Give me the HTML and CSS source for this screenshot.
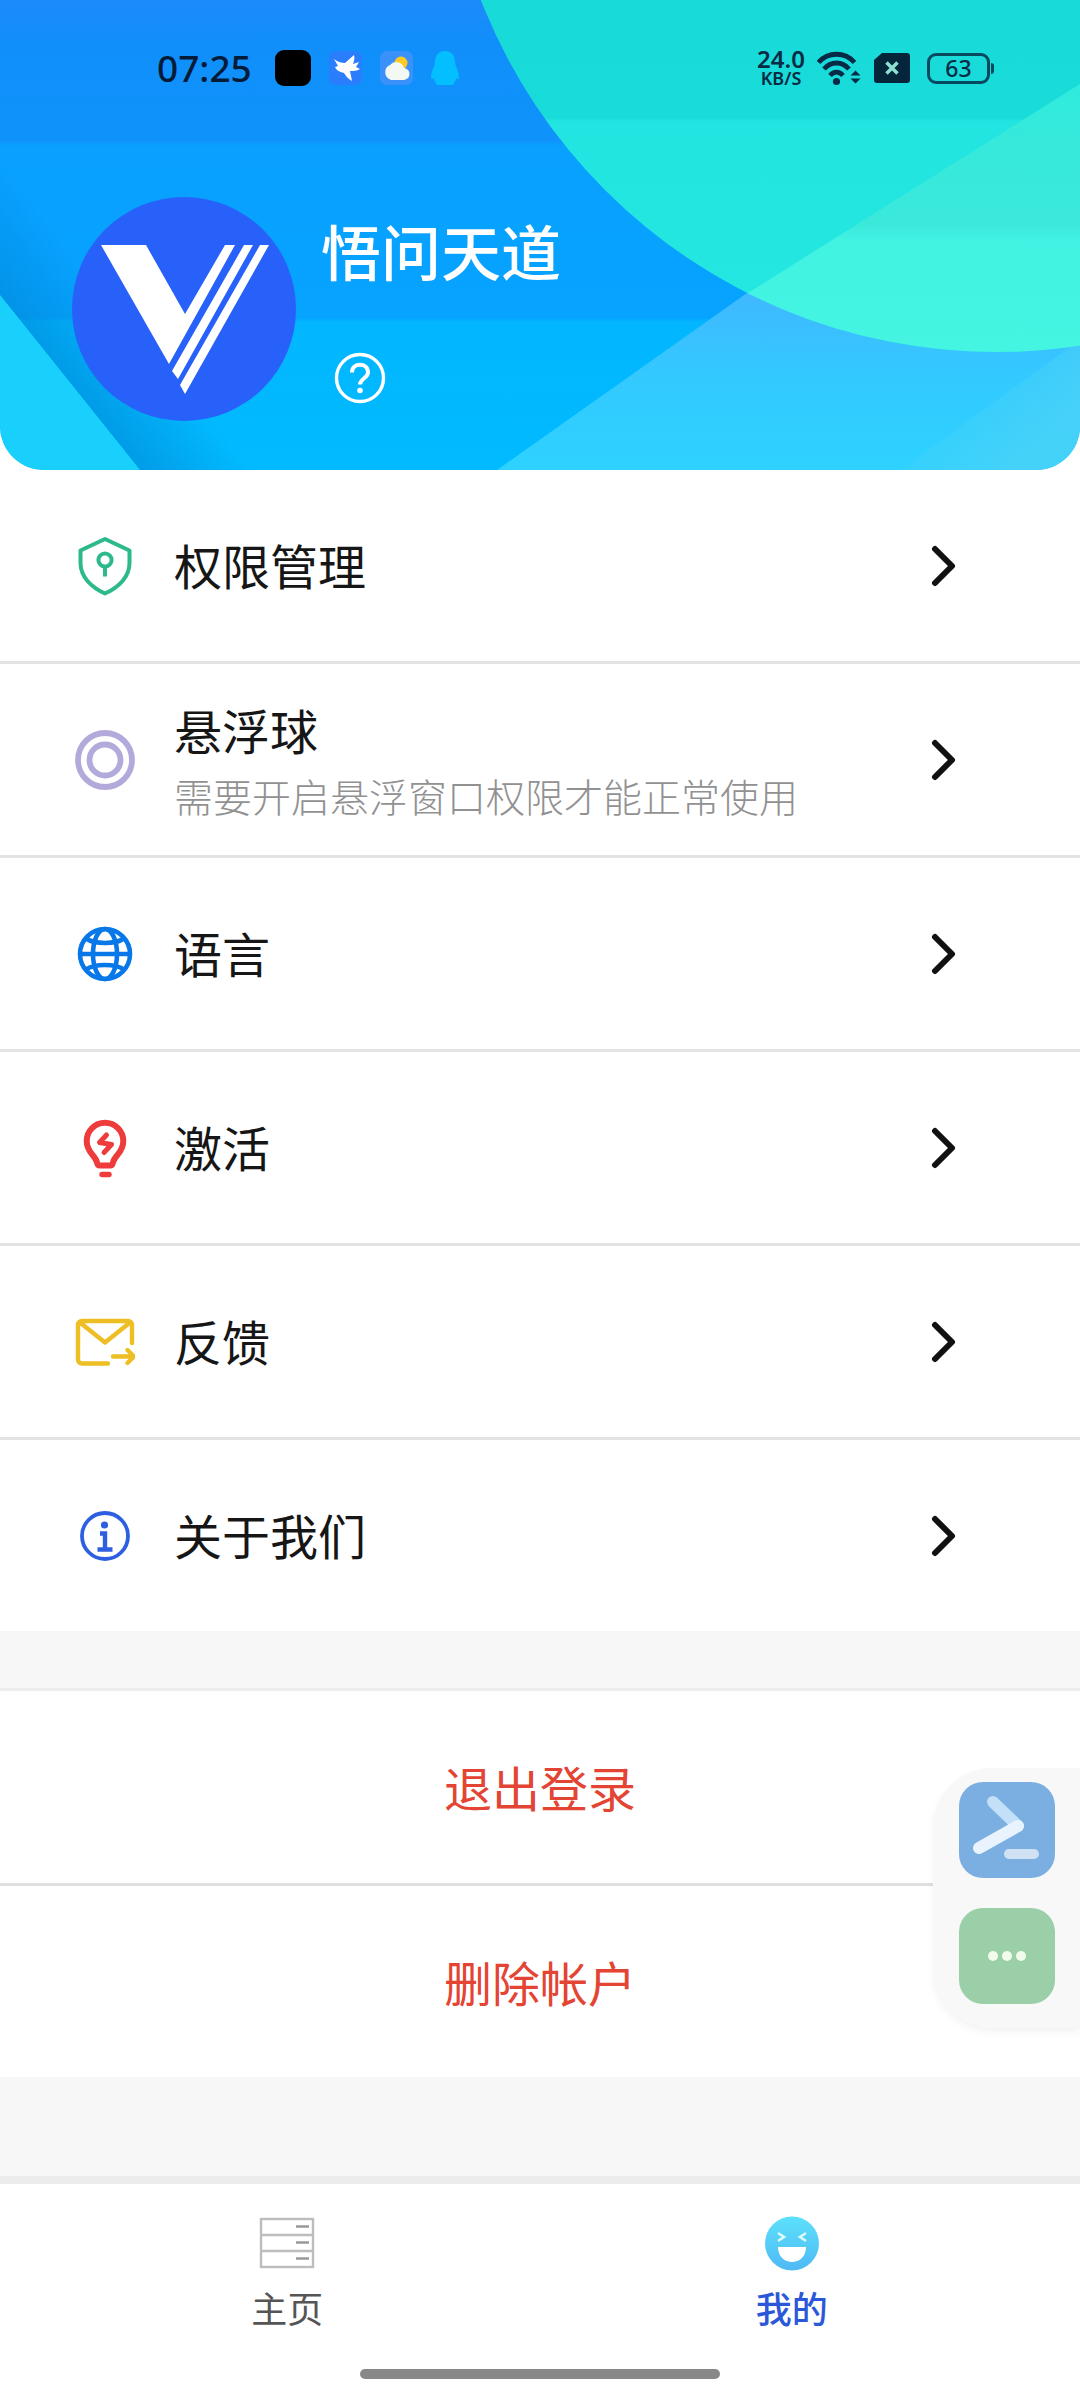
FILE: index.html
```html
<!DOCTYPE html>
<html lang="zh-CN">
<head>
<meta charset="utf-8">
<title>我的</title>
<link rel="stylesheet" href="styles.css">
</head>
<body>
<div class="screen">
  <header class="hero">
    <svg class="hero-art" viewBox="0 0 1080 470" width="1080" height="470" aria-hidden="true">
      <defs>
        <linearGradient id="base" x1="0" y1="0" x2="0" y2="1">
          <stop offset="0" stop-color="#1c8afb"/><stop offset=".1" stop-color="#108ffb"/>
          <stop offset=".3" stop-color="#0f93fb"/><stop offset=".31" stop-color="#09a0ff"/>
          <stop offset=".675" stop-color="#06a3ff"/><stop offset=".685" stop-color="#02b6ff"/>
          <stop offset="1" stop-color="#01baff"/>
        </linearGradient>
        <linearGradient id="edge" gradientUnits="userSpaceOnUse" x1="0" y1="295" x2="65" y2="242">
          <stop offset="0" stop-color="#0089d8" stop-opacity=".6"/><stop offset="1" stop-color="#0089d8" stop-opacity="0"/>
        </linearGradient>
        <linearGradient id="teal" x1="0" y1="0" x2="0" y2="352" gradientUnits="userSpaceOnUse">
          <stop offset="0" stop-color="#18dad8"/><stop offset=".335" stop-color="#19dbd9"/>
          <stop offset=".345" stop-color="#22e4e0"/><stop offset="1" stop-color="#25e8e2"/>
        </linearGradient>
        <linearGradient id="mint" x1="0" y1="50" x2="0" y2="352" gradientUnits="userSpaceOnUse">
          <stop offset="0" stop-color="#2beee0"/><stop offset=".3" stop-color="#36e9da"/>
          <stop offset=".58" stop-color="#3be9db"/><stop offset=".63" stop-color="#42f2e2"/><stop offset="1" stop-color="#45f5e2"/>
        </linearGradient>
        <linearGradient id="sky" x1="0" y1="300" x2="0" y2="470" gradientUnits="userSpaceOnUse">
          <stop offset="0" stop-color="#3fb9ff"/><stop offset=".45" stop-color="#33c9ff"/><stop offset="1" stop-color="#2dd2ff"/>
        </linearGradient>
        <linearGradient id="glow" gradientUnits="userSpaceOnUse" x1="960" y1="360" x2="1040" y2="440">
          <stop offset="0" stop-color="#4ad2f7" stop-opacity="0"/><stop offset="1" stop-color="#4ad2f7" stop-opacity=".8"/>
        </linearGradient>
        <clipPath id="disc"><circle cx="996" cy="-201" r="553"/></clipPath>
      </defs>
      <rect width="1080" height="470" fill="url(#base)"/>
      <path d="M0 170V295L140 470H290Z" fill="url(#edge)"/>
      <path d="M0 295L140 470H0Z" fill="#18d0fb"/>
      <path d="M740 298L1080 54V470H497Z" fill="url(#sky)"/>
      <path d="M900 470L1080 340V470Z" fill="url(#glow)"/>
      <circle cx="996" cy="-201" r="553" fill="url(#teal)"/>
      <path d="M740 298L1080 84V470H497Z" fill="url(#mint)" clip-path="url(#disc)"/>
    </svg>
    <div class="status">
      <div class="status-left">
        <span class="clock">07:25</span>
        <svg width="36" height="36" viewBox="0 0 36 36"><rect width="36" height="36" rx="9" fill="#000"/></svg>
        <svg width="33" height="36" viewBox="0 0 33 36"><rect y="1" width="33" height="34" rx="7" fill="#2a7dfc"/><path d="M5 9c4 3 8 4 11 4L25 5c1 3 0 6-1 9l6-2-3 5 4 2c-3 2-7 2-10 2l2 10c-4-2-6-5-8-8-5-1-8-3-9-6l3-1Z" fill="#fff"/></svg>
        <svg width="33" height="36" viewBox="0 0 33 36"><rect y="1" width="33" height="34" rx="7" fill="#3b91fa"/><circle cx="21" cy="13" r="6.500" fill="#ffcb22"/><path d="M11 30a8 8 0 0 1-1-15 8 8 0 0 1 14 3 6 6 0 0 1-1 12Z" fill="#f3f8f3"/></svg>
        <svg class="bell" width="30" height="36" viewBox="0 0 30 36"><path d="M15 1c7 0 10 5 10 11 0 4 4 9 4 15 0 3-2 2-3 1 0 2-1 4-2 5 1 2-2 2-9 2s-10 0-9-2c-1-1-2-3-2-5-1 1-3 2-3-1 0-6 4-11 4-15C5 6 8 1 15 1Z" fill="#04bfff"/></svg>
      </div>
      <div class="status-right">
        <div class="speed"><span class="speed-value">24.0</span><span class="speed-unit">KB/S</span></div>
        <svg class="wifi" width="44" height="36" viewBox="0 0 44 36" fill="none" stroke="#072b45" stroke-width="4.800"><path d="M1.500 12.500C11 1.500 28 1.500 37.500 12.500M7 19C14 11 25 11 32 19M13 25.500c4-4.500 9-4.500 13 0"/><circle cx="19.500" cy="31.500" r="3.600" fill="#072b45" stroke="none"/><path d="M33.500 25.500l5-5 5 5ZM33.500 28.500l5 5 5-5Z" fill="#072b45" stroke="none"/></svg>
        <svg class="sim" width="36" height="30" viewBox="0 0 36 30"><path d="M8 0h25a3 3 0 0 1 3 3v24a3 3 0 0 1-3 3H3a3 3 0 0 1-3-3V7Z" fill="#05253a"/><path d="M12.500 9.500l11 11M23.500 9.500l-11 11" stroke="#8de0cf" stroke-width="3.500"/></svg>
        <div class="battery">63</div>
      </div>
    </div>
    <div class="profile">
      <svg class="avatar" width="226" height="226" viewBox="0 0 226 226"><circle cx="113" cy="113" r="112" fill="#2861fa"/><path d="M30 49H75L114 118L154 49H164L98 168ZM173 49H182L107 183L101 175ZM189 49H198L114 198L109 189Z" fill="#fff"/></svg>
      <div class="who">
        <div class="name">悟问天道</div>
        <svg class="help" width="52" height="52" viewBox="0 0 52 52" fill="none" stroke="#fff" stroke-width="3.400"><circle cx="26" cy="26" r="23.500"/><path d="M18 20.500c0-10.500 16-10.500 16 0 0 5.500-8 6-8 12" stroke-width="4"/><circle cx="26" cy="38.500" r="2.800" fill="#fff" stroke="none"/></svg>
      </div>
    </div>
  </header>

  <main>
    <ul class="menu">
      <li class="row">
        <svg class="icon" viewBox="0 0 60 60" stroke="#2cb98c" stroke-width="4"><path d="M30 3L54.500 14.500v12.500c0 14-11 24.500-24.500 30.500C16.500 51.500 5.500 41 5.500 27V14.500Z" stroke-linejoin="round"/><circle cx="30" cy="24" r="6.600"/><path d="M30 30.500v10"/></svg>
        <div class="label">权限管理</div>
        <svg class="chevron" viewBox="0 0 26 44"><path d="M4 5l17 17L4 39"/></svg>
      </li>
      <li class="row">
        <svg class="icon" viewBox="0 0 60 60" stroke="#b3aadb" stroke-width="5.800"><circle cx="30" cy="30" r="27"/><circle cx="30" cy="30" r="15.500"/></svg>
        <div class="label">悬浮球<small>需要开启悬浮窗口权限才能正常使用</small></div>
        <svg class="chevron" viewBox="0 0 26 44"><path d="M4 5l17 17L4 39"/></svg>
      </li>
      <li class="row">
        <svg class="icon" viewBox="0 0 60 60" stroke="#0878e8" stroke-width="4.600"><circle cx="30" cy="30" r="25"/><ellipse cx="30" cy="30" rx="12" ry="25"/><path d="M5 30h50M11 14.500c9 6 29 6 38 0M11 45.500c9-6 29-6 38 0"/></svg>
        <div class="label">语言</div>
        <svg class="chevron" viewBox="0 0 26 44"><path d="M4 5l17 17L4 39"/></svg>
      </li>
      <li class="row">
        <svg class="icon" viewBox="0 0 60 60" stroke="#ee3b3b" stroke-width="6" stroke-linejoin="round" stroke-linecap="round"><path d="M22 44.500C20.500 37 11.700 35 11.700 23a18.300 18.300 0 0 1 36.600 0C48.300 35 39.500 37 38 44.500Q37.500 47.500 35 47.500H25Q22.500 47.500 22 44.500Z"/><path d="M31.500 17L24.500 24.500L36.500 26.500L29 34.500" stroke-width="5"/><path d="M27 56.500h7" stroke-width="5.400"/></svg>
        <div class="label">激活</div>
        <svg class="chevron" viewBox="0 0 26 44"><path d="M4 5l17 17L4 39"/></svg>
      </li>
      <li class="row">
        <svg class="icon" viewBox="0 0 60 60" stroke="#edbf25" stroke-width="4.400" stroke-linejoin="round" stroke-linecap="round"><path d="M33 51.500H7a4 4 0 0 1-4-4V13a4 4 0 0 1 4-4H53a4 4 0 0 1 4 4V31M5 10.500L30 30.500L55 10.500M38 44.500H58M52.500 38L59 44.500L52.500 51"/></svg>
        <div class="label">反馈</div>
        <svg class="chevron" viewBox="0 0 26 44"><path d="M4 5l17 17L4 39"/></svg>
      </li>
      <li class="row">
        <svg class="icon" viewBox="0 0 60 60" stroke="#2d5fe0" stroke-width="3.800"><circle cx="30" cy="30" r="23"/><circle cx="29.500" cy="19" r="3.600" fill="#2d5fe0" stroke="none"/><path d="M25 27.500h5V43M22.500 43.500h15" stroke-width="4.400"/></svg>
        <div class="label">关于我们</div>
        <svg class="chevron" viewBox="0 0 26 44"><path d="M4 5l17 17L4 39"/></svg>
      </li>
    </ul>
    <div class="actions">
      <div class="action">退出登录</div>
      <div class="action">删除帐户</div>
    </div>
  </main>

  <nav class="tabs">
    <div class="tab">
      <svg width="58" height="58" viewBox="0 0 58 58" fill="none" stroke="#bdbdbd" stroke-width="2.400"><rect x="3" y="4" width="52" height="48"/><path d="M3 20h52M3 36h52"/><path d="M38 11.500h13M38 27.500h13M38 43.500h13" stroke="#999"/></svg>
      <span>主页</span>
    </div>
    <div class="tab active">
      <svg width="58" height="58" viewBox="0 0 58 58" fill="none"><defs><linearGradient id="face" x1="0" y1="0" x2="0" y2="1"><stop stop-color="#5ce0fb"/><stop offset="1" stop-color="#50b9f5"/></linearGradient></defs><circle cx="29" cy="28.500" r="27" fill="url(#face)"/><path d="M15 18l6 4-6 4M43 18l-6 4 6 4" stroke="#d9fbff" stroke-width="2.600"/><path d="M15 32h28c0 20-28 20-28 0Z" fill="#fff"/></svg>
      <span>我的</span>
    </div>
  </nav>
  <div class="home-bar"></div>

  <aside class="dock">
    <svg width="96" height="96" viewBox="0 0 96 96" fill="none" stroke-linecap="round"><rect width="96" height="96" rx="24" fill="#7bafe2"/><path d="M34 20L59 44" stroke="#c4e0f9" stroke-width="12"/><path d="M59 44L20 66" stroke="#e9f3fd" stroke-width="12"/><path d="M50 72h25" stroke="#cfe1f3" stroke-width="10"/></svg>
    <svg width="96" height="96" viewBox="0 0 96 96"><rect width="96" height="96" rx="24" fill="#9acfa8"/><g fill="#f1fbe9"><circle cx="34" cy="48" r="5"/><circle cx="48" cy="48" r="5"/><circle cx="62" cy="48" r="5"/></g></svg>
  </aside>
</div>
</body>
</html>
```
FILE: styles.css
```css
* { box-sizing: border-box; }

body {
  margin: 0;
  background: #fff;
  font-family: "Noto Sans CJK SC", sans-serif;
  color: #161616;
}

svg { display: block; flex: none; }

.screen {
  position: relative;
  display: flex;
  flex-direction: column;
  width: 1080px;
  height: 2400px;
  overflow: hidden;
  background: #fff;
}

/* Header */
.hero {
  position: relative;
  flex: none;
  height: 470px;
  border-radius: 0 0 44px 44px;
  overflow: hidden;
}

.hero-art { position: absolute; inset: 0; }

.status {
  position: relative;
  display: flex;
  justify-content: space-between;
  align-items: center;
  height: 136px;
  padding: 0 90px 0 157px;
}

.status-left { display: flex; align-items: center; gap: 18px; }

.clock {
  width: 100px;
  font: 500 37px/48px "Noto Sans", sans-serif;
  color: #041b38;
}

.bell { margin-left: -1px; }

.status-right { display: flex; align-items: center; color: #072b45; }

.speed {
  display: flex;
  flex-direction: column;
  align-items: center;
  width: 52px;
  font-family: "Noto Sans", sans-serif;
}

.speed-value { font-size: 24px; font-weight: 600; line-height: 20px; }
.speed-unit { font-size: 18px; font-weight: 600; line-height: 18px; }

.wifi { margin-left: 10px; }
.sim { margin-left: 13px; }

.battery {
  position: relative;
  width: 63px;
  height: 31px;
  margin-left: 17px;
  border: 3px solid #074a60;
  border-radius: 9px;
  font: 500 23px/25px "Noto Sans", sans-serif;
  text-align: center;
}

.battery::after {
  content: "";
  position: absolute;
  top: 7px;
  right: -7px;
  width: 3px;
  height: 11px;
  border-radius: 0 3px 3px 0;
  background: #074a60;
}

.profile {
  position: relative;
  display: flex;
  gap: 24px;
  padding: 60px 0 0 71px;
}

.who { padding-top: 10px; }

.name {
  font-size: 60px;
  font-weight: 500;
  line-height: 88px;
  color: #fff;
}

.help { margin: 58px 0 0 13px; }

/* Settings list */
.menu { margin: 0; padding: 0; list-style: none; }

.row {
  display: flex;
  align-items: center;
  gap: 39px;
  height: 194px;
  padding: 0 123px 0 75px;
  border-bottom: 3px solid #e3e3e3;
}

.row:last-child { height: 191px; border-bottom: 0; }

.icon { width: 60px; height: 60px; fill: none; }

.label {
  flex: 1;
  padding-bottom: 3px;
  font-size: 48px;
  line-height: 70px;
}

.label small {
  display: block;
  margin-top: 3px;
  font-size: 39px;
  font-weight: 300;
  line-height: 56px;
  color: #919191;
}

.chevron {
  width: 26px;
  height: 44px;
  fill: none;
  stroke: #111;
  stroke-width: 6;
  stroke-linecap: round;
  stroke-linejoin: round;
}

.actions {
  border: solid #f7f7f7;
  border-width: 57px 0 99px;
}

.action {
  display: flex;
  align-items: center;
  justify-content: center;
  height: 195px;
  padding-bottom: 2px;
  border-top: 3px solid #ededed;
  font-size: 48px;
  color: #e34433;
}

.action + .action { height: 194px; border-top-color: #e0e0e0; }

/* Bottom navigation */
.tabs {
  display: flex;
  flex: none;
  height: 185px;
  padding: 31px 36px 0 35px;
  border-top: 8px solid #ececec;
}

.tab {
  flex: 1;
  display: flex;
  flex-direction: column;
  align-items: center;
  gap: 8px;
  font-size: 36px;
  line-height: 52px;
  color: #555;
}

.tab.active { color: #2b57d9; font-weight: 500; }

.home-bar {
  flex: none;
  width: 360px;
  height: 10px;
  margin: 8px auto 0;
  border-radius: 5px;
  background: #888;
}

/* Floating shortcut panel pinned to the right edge */
.dock {
  position: absolute;
  top: 1768px;
  right: 0;
  display: flex;
  flex-direction: column;
  gap: 30px;
  width: 147px;
  height: 260px;
  padding: 14px 0 0 26px;
  border-radius: 60px 0 0 60px;
  background: #f8f8f8;
  box-shadow: 0 4px 8px rgba(0, 0, 0, .05);
}
```
